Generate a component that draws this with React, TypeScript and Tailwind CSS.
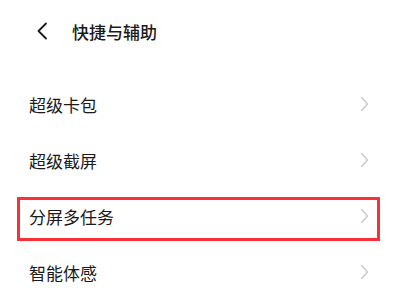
const items = ["超级卡包", "超级截屏", "分屏多任务", "智能体感"];

function Chevron() {
  return (
    <svg width="9" height="16" viewBox="0 0 9 16" fill="none" className="shrink-0">
      <path d="M1.5 1.5 L7.5 8 L1.5 14.5" stroke="#c9c9c9" strokeWidth="1.4" strokeLinecap="round" strokeLinejoin="round" />
    </svg>
  );
}

export default function App() {
  return (
    <div
      className="w-[400px] h-[300px] overflow-hidden bg-white text-[#1a1a1a]"
      style={{ fontFamily: '"Noto Sans CJK SC", "Noto Sans", sans-serif' }}
    >
      {/* header */}
      <header className="h-[62px] flex items-center pl-[36px]">
        <svg width="13" height="18" viewBox="0 0 13 18" fill="none">
          <path d="M10 1.5 L2.5 9 L10 16.5" stroke="#1a1a1a" strokeWidth="1.8" strokeLinecap="round" strokeLinejoin="round" />
        </svg>
        <h1 className="ml-[23px] text-[17px] font-medium leading-none">快捷与辅助</h1>
      </header>

      {/* list */}
      <div className="mt-[14px]">
        {items.map((label, i) => (
          <div key={label} className="relative h-[56px] flex items-center justify-between pl-[29px] pr-[31px]">
            <span className="text-[17px] leading-none">{label}</span>
            <Chevron />
            {i === 2 && (
              <div className="absolute left-[17px] top-[9px] w-[363px] h-[44px] border-[3px] border-[#fb3036]" />
            )}
          </div>
        ))}
      </div>
    </div>
  );
}
